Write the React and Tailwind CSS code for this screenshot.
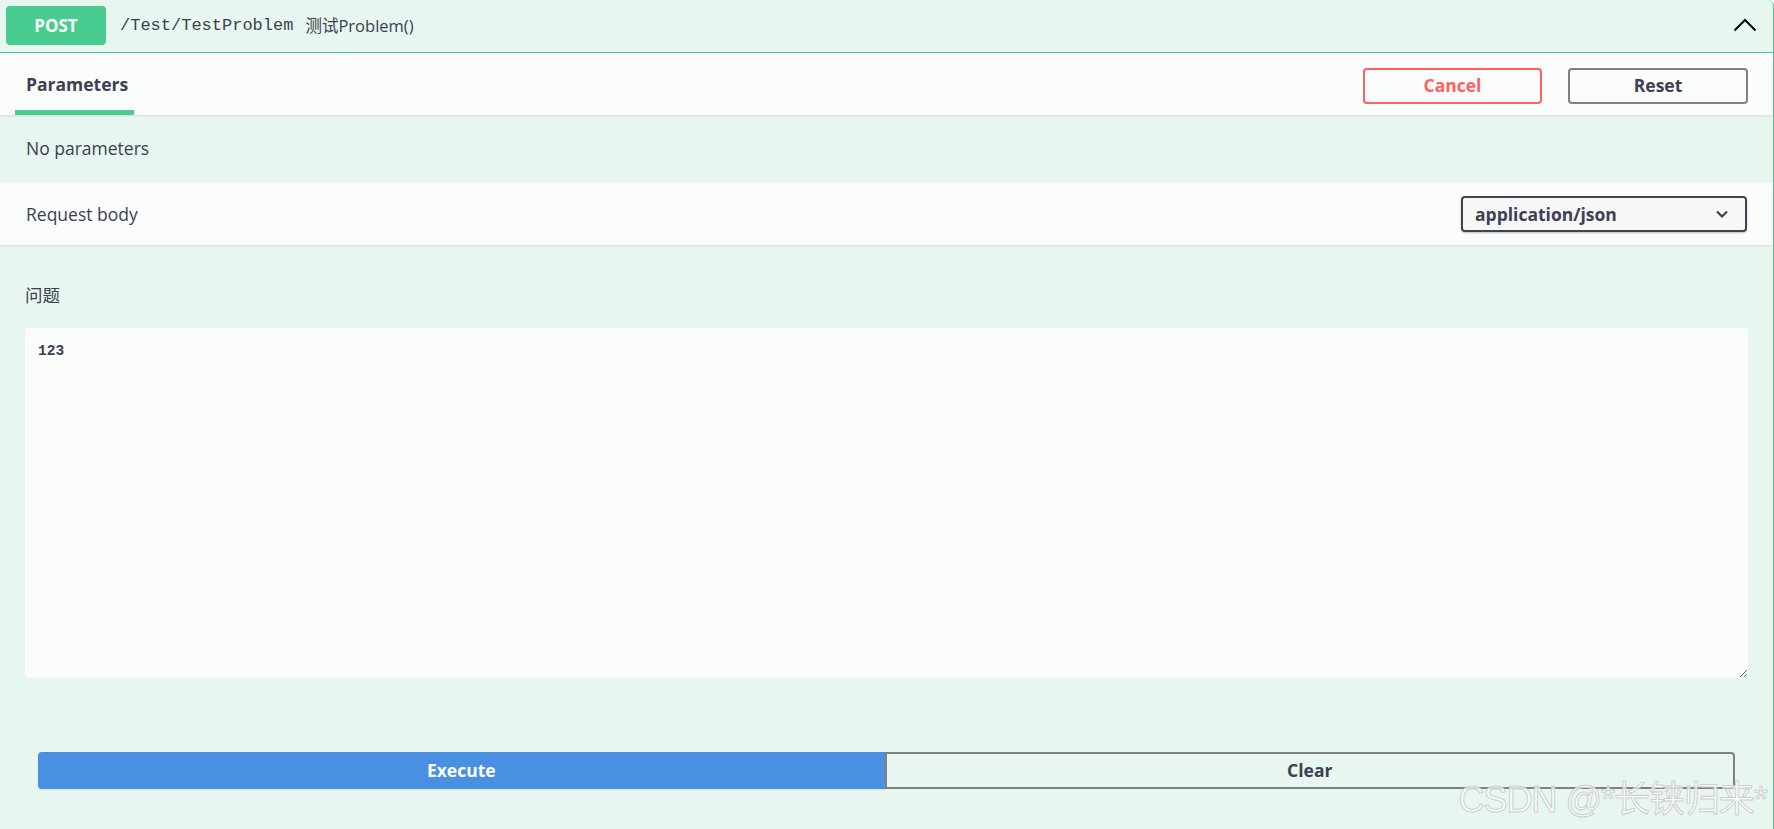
import React from "react";

const sans = "font-['Open_Sans','Noto_Sans_CJK_SC',sans-serif]";

const ChevronUp = () => (
  <svg width="24" height="16" viewBox="0 0 24 16" fill="none">
    <polyline points="1.5,13.5 12,3 22.5,13.5" stroke="#000" strokeWidth="2" />
  </svg>
);

const ChevronDown = () => (
  <svg width="14" height="10" viewBox="0 0 14 10" fill="none">
    <polyline points="2,2.5 7,7.5 12,2.5" stroke="#3b4151" strokeWidth="2.2" />
  </svg>
);

const App = () => {
  return (
    <div className={`${sans} relative w-full h-[829px] bg-[#e8f6f0] border-r border-[#49cc90] rounded-tr-[6px] text-[#3b4151] flex flex-col`}>
      {/* summary */}
      <div className="h-[53px] flex items-center pl-[6px] pr-[16px] border-b border-[#49cc90] shrink-0">
        <div className="w-[100px] h-[39px] rounded-[4px] bg-[#49cc90] text-white text-[17px] font-bold flex items-center justify-center mt-[-1px]">
          POST
        </div>
        <span className="ml-[14px] font-['Liberation_Mono',monospace] text-[17px] text-[#3b4151]">
          /Test/TestProblem
        </span>
        <span className="ml-[12px] text-[16.5px] text-[#3b4151]">测试Problem()</span>
        <div className="ml-auto mt-[-2px]">
          <ChevronUp />
        </div>
      </div>

      {/* tabs header */}
      <div className="h-[62px] bg-[#fafdfc] shadow-[0_1px_2px_rgba(0,0,0,0.1)] flex items-stretch pr-[25px] shrink-0 relative z-10">
        <div className="ml-[15px] w-[119px] pl-[11px] pt-[5px] border-b-[5px] border-[#49cc90] flex items-center text-[17.5px] font-bold text-[#3b4151]">
          Parameters
        </div>
        <div className="ml-auto flex items-center gap-[26px] pt-[3px]">
          <button className="w-[179px] h-[36px] rounded-[4px] border-2 border-[#ff6060] text-[#ff6060] text-[17.5px] font-bold bg-transparent">
            Cancel
          </button>
          <button className="w-[180px] h-[36px] rounded-[4px] border-2 border-[#808080] text-[#3b4151] text-[17.5px] font-bold bg-transparent">
            Reset
          </button>
        </div>
      </div>

      {/* parameters body */}
      <div className="h-[68px] flex items-center pl-[26px] pb-[2px] text-[17.5px] text-[#3b4151] shrink-0">
        No parameters
      </div>

      {/* request body header */}
      <div className="h-[62px] bg-[#fafdfc] shadow-[0_1px_2px_rgba(0,0,0,0.1)] flex items-center pl-[26px] pr-[26px] shrink-0 relative z-10">
        <span className="text-[17.5px] text-[#3b4151]">Request body</span>
        <div className="ml-auto w-[286px] h-[36px] rounded-[4px] border-2 border-[#41444e] bg-[#f7f7f7] shadow-[0_1px_2px_rgba(0,0,0,0.25)] flex items-center pl-[12px] pr-[16px]">
          <span className="text-[17.5px] font-bold text-[#3b4151]">application/json</span>
          <span className="ml-auto">
            <ChevronDown />
          </span>
        </div>
      </div>

      {/* request body */}
      <div className="flex-1 flex flex-col">
        <div className="pl-[25px] pt-[40px] text-[17.5px] text-[#3b4151] leading-[20px]">问题</div>
        <div className="mt-[23px] ml-[25px] mr-[25px]">
          <textarea
            readOnly
            defaultValue="123"
            className="block w-full h-[350px] rounded-[4px] bg-[#fafdfc] border-0 outline-none px-[13px] pt-[13px] font-['Liberation_Mono',monospace] font-semibold text-[14.5px] leading-[20px] text-[#3b4151] resize-y"
          />
        </div>

        <div className="mt-[74px] ml-[38px] mr-[38px] flex h-[37px]">
          <button className="flex-1 h-full rounded-l-[4px] bg-[#4990e2] text-white text-[17.5px] font-bold shadow-[0_1px_2px_rgba(0,0,0,0.1)]">
            Execute
          </button>
          <button className="flex-1 h-full rounded-r-[4px] border-2 border-[#808080] bg-transparent text-[#3b4151] text-[17.5px] font-bold">
            Clear
          </button>
        </div>
      </div>

      {/* watermark */}
      <div className="absolute right-[6px] bottom-[11px] font-['Liberation_Sans','Noto_Sans_CJK_SC',sans-serif] text-[36px] leading-none tracking-[-1px] text-white/70 [-webkit-text-stroke:1px_#cfcfcf] pointer-events-none">
        CSDN @*长铗归来*
      </div>
    </div>
  );
};

export default App;
